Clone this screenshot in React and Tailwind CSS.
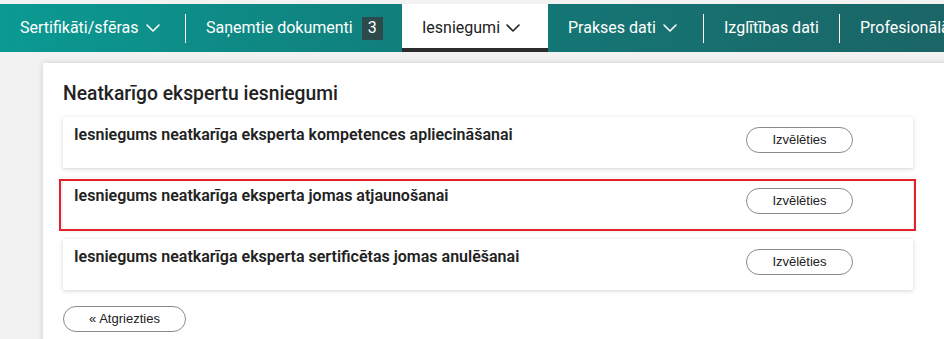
import { ChevronDown } from "lucide-react";

const rows = [
  "Iesniegums neatkarīga eksperta kompetences apliecināšanai",
  "Iesniegums neatkarīga eksperta jomas atjaunošanai",
  "Iesniegums neatkarīga eksperta sertificētas jomas anulēšanai",
];

function Divider() {
  return <div className="w-px h-[29px] bg-white self-center shrink-0" />;
}

function NavItem({ children, active, className = "" }) {
  return (
    <div
      className={
        "flex items-center shrink-0 h-full pl-[20px] " +
        (active
          ? "bg-white text-[#222] border-b-4 border-[#2b2b2b] pt-[4px] "
          : "text-white ") +
        className
      }
    >
      {children}
    </div>
  );
}

function PillButton({ children, className = "" }) {
  return (
    <button
      type="button"
      className={
        "h-[26px] rounded-full border border-[#8a8a8a] bg-white text-[13px] text-[#222] flex items-center justify-center " +
        className
      }
      style={{ fontFamily: '"Liberation Sans", Arial, sans-serif' }}
    >
      {children}
    </button>
  );
}

export default function App() {
  return (
    <div
      className="w-[944px] h-[339px] overflow-hidden bg-[#f2f2f2] pt-[4px]"
      style={{ fontFamily: 'Roboto, "Noto Sans", sans-serif' }}
    >
      {/* top navigation */}
      <nav className="h-[48px] flex items-stretch bg-gradient-to-r from-[#0a9a93] via-[#117a78] to-[#1b6566] text-[16px] whitespace-nowrap overflow-hidden">
        <NavItem className="w-[185px]">
          Sertifikāti/sfēras
          <ChevronDown size={24} strokeWidth={1.6} className="ml-[2px]" />
        </NavItem>
        <Divider />
        <NavItem className="w-[216px]">
          Saņemtie dokumenti
          <span className="ml-[9px] w-[21px] h-[23px] bg-[#2c4a4a] flex items-center justify-center text-white">
            3
          </span>
        </NavItem>
        <NavItem active className="w-[146px]">
          Iesniegumi
          <ChevronDown size={24} strokeWidth={1.6} className="ml-[1px]" />
        </NavItem>
        <NavItem className="w-[155px]">
          Prakses dati
          <ChevronDown size={24} strokeWidth={1.6} className="ml-[2px]" />
        </NavItem>
        <Divider />
        <NavItem className="w-[135px]">Izglītības dati</NavItem>
        <Divider />
        <NavItem>Profesionālā pieredze</NavItem>
      </nav>

      {/* content card */}
      <div className="pt-[11px] pl-[43px]">
        <div className="bg-white w-[920px] h-[300px] shadow-[0_0_6px_rgba(0,0,0,0.15)] pl-[20px] pt-[19px]">
          <h2 className="text-[19.3px] font-medium text-[#222] leading-[24px] mb-[11px]">
            Neatkarīgo ekspertu iesniegumi
          </h2>

          <div className="flex flex-col gap-[10px] w-[850px]">
            {rows.map((label, i) => (
              <div
                key={label}
                className="relative h-[51px] bg-white shadow-[0_1px_4px_rgba(0,0,0,0.18)] flex justify-between items-start pl-[11px] pr-[60px]"
              >
                <div className="pt-[8px] text-[16px] font-semibold text-[#222] leading-[20px]">
                  {label}
                </div>
                <PillButton className="w-[107px] mt-[10px]">Izvēlēties</PillButton>
                {i === 1 && (
                  <div className="absolute -left-[4px] -right-[3px] top-[1px] -bottom-[2px] border-2 border-[#e4202b] pointer-events-none" />
                )}
              </div>
            ))}
          </div>

          <PillButton className="w-[123px] mt-[16px]">« Atgriezties</PillButton>
        </div>
      </div>
    </div>
  );
}
